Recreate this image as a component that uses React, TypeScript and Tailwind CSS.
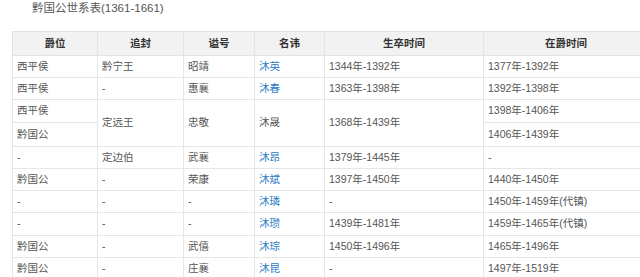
import React from "react";

type Cell = { t: string; link?: boolean; rs?: number };
type Row = { h: number; cells: Cell[] };

const rows: Row[] = [
  { h: 22, cells: [{ t: "西平侯" }, { t: "黔宁王" }, { t: "昭靖" }, { t: "沐英", link: true }, { t: "1344年-1392年" }, { t: "1377年-1392年" }] },
  { h: 22, cells: [{ t: "西平侯" }, { t: "-" }, { t: "惠襄" }, { t: "沐春", link: true }, { t: "1363年-1398年" }, { t: "1392年-1398年" }] },
  { h: 23, cells: [{ t: "西平侯" }, { t: "定远王", rs: 2 }, { t: "忠敬", rs: 2 }, { t: "沐晟", rs: 2 }, { t: "1368年-1439年", rs: 2 }, { t: "1398年-1406年" }] },
  { h: 24, cells: [{ t: "黔国公" }, { t: "1406年-1439年" }] },
  { h: 22, cells: [{ t: "-" }, { t: "定边伯" }, { t: "武襄" }, { t: "沐昂", link: true }, { t: "1379年-1445年" }, { t: "-" }] },
  { h: 22, cells: [{ t: "黔国公" }, { t: "-" }, { t: "荣康" }, { t: "沐斌", link: true }, { t: "1397年-1450年" }, { t: "1440年-1450年" }] },
  { h: 22, cells: [{ t: "-" }, { t: "-" }, { t: "-" }, { t: "沐璘", link: true }, { t: "-" }, { t: "1450年-1459年(代镇)" }] },
  { h: 23, cells: [{ t: "-" }, { t: "-" }, { t: "-" }, { t: "沐瓒", link: true }, { t: "1439年-1481年" }, { t: "1459年-1465年(代镇)" }] },
  { h: 22, cells: [{ t: "黔国公" }, { t: "-" }, { t: "武僖" }, { t: "沐琮", link: true }, { t: "1450年-1496年" }, { t: "1465年-1496年" }] },
  { h: 22, cells: [{ t: "黔国公" }, { t: "-" }, { t: "庄襄" }, { t: "沐昆", link: true }, { t: "-" }, { t: "1497年-1519年" }] },
];

const heads = ["爵位", "追封", "谥号", "名讳", "生卒时间", "在爵时间"];
const widths = [85, 86, 71, 70, 159, 165];

export default function App() {
  return (
    <div
      className="w-[640px] h-[277px] overflow-hidden bg-white text-[#555]"
      style={{ fontFamily: '"Liberation Sans", "Noto Sans CJK SC", sans-serif' }}
    >
      <div className="h-[31px] pl-[32px] pt-0 text-[11.5px] leading-[17px] text-[#555]">
        黔国公世系表(1361-1661)
      </div>
      <div className="pl-[12px]">
        <table className="border-collapse table-fixed w-[636px] text-[10.5px]">
          <colgroup>
            {widths.map((w, i) => (
              <col key={i} style={{ width: w }} />
            ))}
          </colgroup>
          <thead>
            <tr className="h-[24px] bg-[#f2f2f2]">
              {heads.map((h) => (
                <th
                  key={h}
                  className="border border-[#e3e3e3] text-center font-bold text-[#333] p-0"
                >
                  {h}
                </th>
              ))}
            </tr>
          </thead>
          <tbody>
            {rows.map((r, i) => (
              <tr key={i} style={{ height: r.h }}>
                {r.cells.map((c, j) => (
                  <td
                    key={j}
                    rowSpan={c.rs}
                    className={
                      "border border-[#e6e6e6] pl-[4px] py-0 text-left align-middle whitespace-nowrap " +
                      (c.link ? "text-[#2b7bc4]" : "text-[#555]")
                    }
                  >
                    {c.t}
                  </td>
                ))}
              </tr>
            ))}
          </tbody>
        </table>
      </div>
    </div>
  );
}
